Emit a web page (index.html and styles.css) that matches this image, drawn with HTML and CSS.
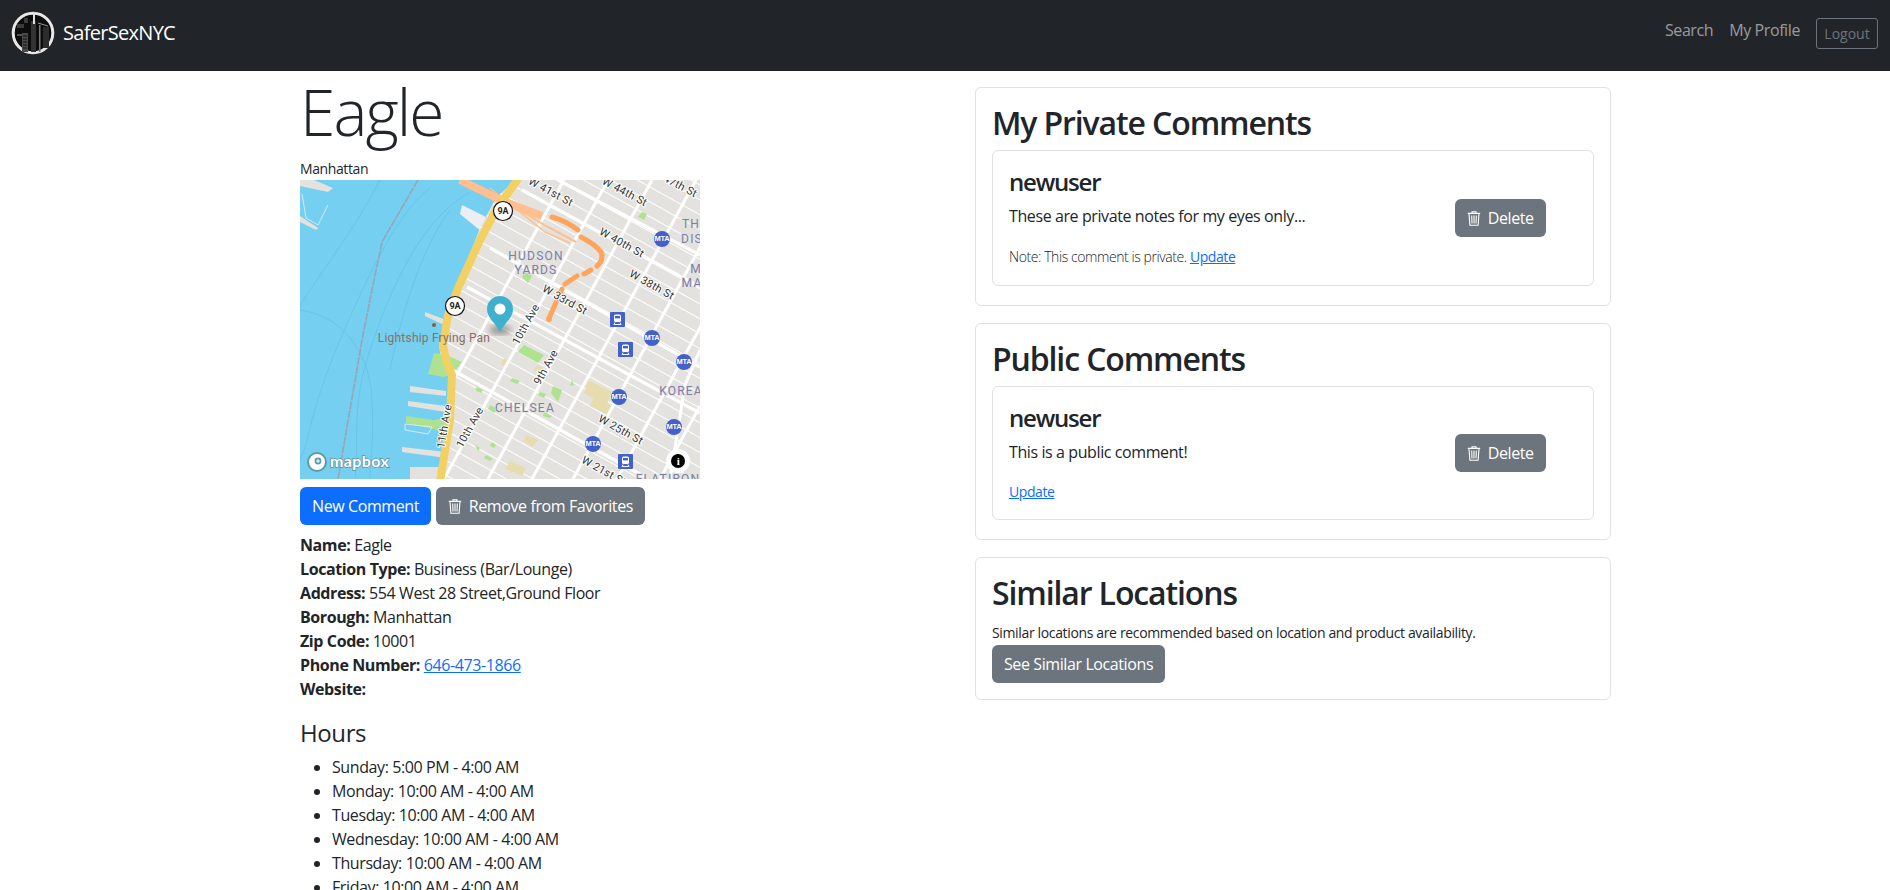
FILE: index.html

```html
<!DOCTYPE html>
<html>
<head>
  <meta charset="UTF-8">
  <title>SaferSexNYC</title>
  <link rel="stylesheet" href="styles.css">
</head>
<body>

<nav class="navbar">
  <a class="brand" href="#">
    <svg class="brandLogo" viewBox="0 0 44 44">
      <circle cx="22" cy="22" r="19.8" fill="#0c0c0c" stroke="#e8e8e8" stroke-width="3"/>
      <path d="M6 13h7v4H6zM13 7h4v5h-4z" fill="#3a3a3a"/>
      <rect x="11" y="22" width="6" height="19" fill="#4a4a4a"/>
      <rect x="20" y="10" width="5" height="31" fill="#333"/>
      <rect x="22" y="1" width="2" height="12" fill="#ddd"/>
      <rect x="28" y="14" width="1.5" height="27" fill="#777"/>
      <rect x="32" y="16" width="6" height="21" fill="#2c2c2c"/>
      <path d="M27 12l10 3M6 24h5" stroke="#999" stroke-width="1"/>
      <path d="M12 25h4M12 28h4M12 31h4M12 34h4M12 37h4" stroke="#111" stroke-width="1"/>
    </svg>
    <span>SaferSexNYC</span>
  </a>
  <div class="navLinks">
    <a href="#">Search</a>
    <a href="#">My Profile</a>
    <button class="btnLogout">Logout</button>
  </div>
</nav>

<main class="page">
  <section class="details">
    <h1 class="title">Eagle</h1>
    <div class="borough">Manhattan</div>

    <svg class="map" viewBox="0 0 400 299">
      <defs>
        <pattern id="streets" width="13" height="13" patternUnits="userSpaceOnUse" patternTransform="rotate(29)">
          <rect width="13" height="13" fill="#e4e2de"/>
          <rect y="5" width="13" height="1" fill="#fff"/>
        </pattern>
        <filter id="blur"><feGaussianBlur stdDeviation="3"/></filter>
        <symbol id="rail" viewBox="0 0 15 15">
          <rect width="15" height="15" rx="1" fill="#4460c9"/>
          <rect x="4" y="2.5" width="7" height="7.5" rx="1.5" fill="#fff"/>
          <rect x="5" y="4" width="5" height="2.4" fill="#4460c9"/>
          <path d="M4.5 12.5h6M5 10.5l-1 2.5M10 10.5l1 2.5" stroke="#fff" stroke-width="1"/>
        </symbol>
      </defs>

      <rect width="400" height="299" fill="#75cff0"/>

      <!-- water lines -->
      <g class="waterLines">
        <path d="M80 0C60 40 30 80 0 125"/>
        <path d="M130 8C100 30 70 90 40 160S10 260 0 280"/>
        <path d="M170 12C120 40 90 110 70 170S60 260 55 299"/>
        <path d="M0 130C40 135 70 170 72 220S70 280 70 299"/>
        <path d="M150 30C120 70 100 140 90 190"/>
      </g>
      <path class="channel" d="M118 0L82 62L72 110L62 160L38 299"/>

      <!-- piers -->
      <g class="pier">
        <path d="M0 6L28 12L33 8L14 0H0zM0 36L18 48L16 50L0 42z"/>
        <path d="M162 25L186 37L182 52L160 34z" fill="#eceef2"/>
        <path d="M110 206L146 211V216L110 212zM108 221L146 226V232L108 226zM102 267L146 272V278L102 272zM125 132L146 140V146L125 136zM110 287H146V299H110z"/>
      </g>
      <path class="park" d="M106 236L133 240V249L106 243z"/>
      <path class="park" d="M133 240L146 238V252L133 249z"/>
      <path d="M2 14L6 38L18 45L28 25" class="pierLine"/>
      <path d="M105 244L132 247L128 254L105 250z" class="pierLine"/>

      <!-- land -->
      <path fill="url(#streets)" d="M215 0L196 18L180 48L160 100L146 133L139 165L142 185L150 195L147 240L138 299H400V0z"/>
      <path class="park" d="M134 173L146 175L162 182L152 195L143 197L128 194z"/>

      <!-- parks and lots -->
      <g class="park">
        <path d="M224 165L244 175L238 183L218 172zM342 32L347 34L344 40L338 37zM226 90L232 96L228 103L222 97z"/>
        <path d="M212 198L220 201L217 204L210 201zM253 206L262 210L258 222L251 213zM272 200L274 205L270 206zM177 207L183 210L181 213L175 210z"/>
        <path d="M190 225L198 229L194 233L188 229zM240 212L246 214L244 218L238 215zM192 262L196 265L194 268L190 266zM244 232L252 236L250 238L243 236z"/>
        <path d="M175 265L180 268L178 271zM186 275L193 279L190 281L184 278zM300 72L306 74L302 78z"/>
      </g>
      <g class="lot">
        <path d="M288 200L312 212L306 226L284 213zM294 217L312 226L306 234L290 226zM204 178L208 180L204 187L201 184zM226 255L238 260L232 267L224 261zM210 281L226 288L222 296L205 289zM238 185L244 189L238 193L233 190z"/>
      </g>

      <!-- avenues -->
      <g class="avenue">
        <path d="M156 197L264 0"/>
        <path d="M144 299L308 0"/>
        <path d="M188 299L352 0"/>
        <path d="M232 299L396 0"/>
        <path d="M273 299L437 0"/>
        <path d="M317 299L481 0"/>
        <path d="M360 299L400 226"/>
        <path d="M370 299L385 205L400 170"/>
      </g>
      <g class="street">
        <path d="M222 10L400 107"/>
        <path d="M190 68L400 187"/>
        <path d="M167 107L400 233"/>
        <path d="M147 187L345 297"/>
        <path d="M258 0L400 75"/>
      </g>

      <!-- rail yards -->
      <g class="railBand">
        <path d="M160 0L205 22L242 36" stroke-width="8"/>
        <path d="M200 18L246 46L276 62" stroke-width="2"/>
        <path d="M190 8L245 52L270 63" stroke-width="1.5"/>
      </g>
      <g class="railLine">
        <path d="M252 37Q266 41 278 50"/>
        <path d="M281 57Q296 65 301 72Q304 80 297 86"/>
        <path d="M291 90L284 94"/>
        <path d="M277 96L265 104"/>
        <path d="M262 109L250 136"/>
      </g>
      <circle cx="249" cy="139" r="3" fill="#ffa45c"/>

      <!-- highway -->
      <path class="highway" d="M220 -4L196 30L180 60L158 108L148 135L143 165L146 180L152 195L150 240L140 302"/>
      <circle cx="134" cy="145" r="2" fill="#8b5a44"/>

      <!-- transit -->
      <use href="#rail" x="310" y="132" width="15" height="15"/>
      <use href="#rail" x="318" y="162" width="15" height="15"/>
      <use href="#rail" x="318" y="274" width="15" height="15"/>
      <g class="mta">
        <circle cx="362" cy="59" r="8"/><text x="362" y="61">MTA</text>
        <circle cx="352" cy="158" r="8"/><text x="352" y="160">MTA</text>
        <circle cx="384" cy="182" r="8"/><text x="384" y="184">MTA</text>
        <circle cx="319" cy="217" r="8"/><text x="319" y="219">MTA</text>
        <circle cx="374" cy="247" r="8"/><text x="374" y="249">MTA</text>
        <circle cx="293" cy="264" r="8"/><text x="293" y="266">MTA</text>
      </g>

      <!-- labels -->
      <g class="roadLabel">
        <text transform="translate(249 15) rotate(28)">W 41st St</text>
        <text transform="translate(323 15) rotate(28)">W 44th St</text>
        <text transform="translate(373 6) rotate(28)">W 47th St</text>
        <text transform="translate(320 66) rotate(29)">W 40th St</text>
        <text transform="translate(350 108) rotate(29)">W 38th St</text>
        <text transform="translate(263 123) rotate(29)">W 33rd St</text>
        <text transform="translate(319 253) rotate(29)">W 25th St</text>
        <text transform="translate(302 294) rotate(29)">W 21st St</text>
        <text transform="translate(229 146) rotate(-61)">10th Ave</text>
        <text transform="translate(173 249) rotate(-61)">10th Ave</text>
        <text transform="translate(249 189) rotate(-61)">9th Ave</text>
        <text transform="translate(148 247) rotate(-80)">11th Ave</text>
      </g>
      <g class="areaLabel">
        <text x="236" y="80">HUDSON</text>
        <text x="236" y="94">YARDS</text>
        <text x="225" y="232">CHELSEA</text>
        <text x="381" y="215">KOREA</text>
        <text x="391" y="48">TH</text>
        <text x="392" y="63">DIS</text>
        <text x="396" y="93">M</text>
        <text x="392" y="107">MA</text>
        <text x="368" y="303">FLATIRON</text>
      </g>
      <text class="poiLabel" x="134" y="162">Lightship Frying Pan</text>

      <!-- 9A shields -->
      <g class="shield">
        <circle cx="203" cy="31" r="9.5"/><text x="203" y="34">9A</text>
        <circle cx="155" cy="126" r="9.5"/><text x="155" y="129">9A</text>
      </g>

      <!-- marker -->
      <ellipse cx="200" cy="150" rx="11" ry="4.5" fill="#555" opacity=".55" filter="url(#blur)"/>
      <path d="M200 152C194 141 187 138 187 129A13 13 0 0 1 213 129C213 138 206 141 200 152z" fill="#3fb1ce"/>
      <circle cx="200" cy="129" r="5.5" fill="#fff"/>

      <!-- mapbox logo -->
      <circle cx="17" cy="282" r="9" fill="#fff" stroke="#5f9aa8" stroke-width="2"/>
      <circle cx="18" cy="281" r="3.4" fill="#5f9aa8"/>
      <path d="M18 279v4M16 281h4" stroke="#fff" stroke-width="1"/>
      <text class="mapboxLogo" x="30" y="287">mapbox</text>

      <!-- info -->
      <circle cx="378" cy="281" r="12" fill="#fff" opacity=".9"/>
      <circle cx="378" cy="281" r="7" fill="#000"/>
      <text class="infoMark" x="378" y="285">i</text>
    </svg>

    <div class="actions">
      <button class="btn btnPrimary">New Comment</button>
      <button class="btn btnSecondary">
        <svg class="trash" viewBox="0 0 14 15"><path d="M5 2V.8h4V2M.8 2.4h12.4M2 2.6l.9 11.6h8.2L12 2.6M4.7 4.6l.3 7.8M7 4.6v7.8M9.3 4.6L9 12.4"/></svg>
        Remove from Favorites
      </button>
    </div>

    <div class="infoList">
      <div><b>Name:</b> Eagle</div>
      <div><b>Location Type:</b> Business (Bar/Lounge)</div>
      <div><b>Address:</b> 554 West 28 Street,Ground Floor</div>
      <div><b>Borough:</b> Manhattan</div>
      <div><b>Zip Code:</b> 10001</div>
      <div><b>Phone Number:</b> <a href="#">646-473-1866</a></div>
      <div><b>Website:</b></div>
    </div>

    <h4 class="hoursTitle">Hours</h4>
    <ul class="hours">
      <li>Sunday: 5:00 PM - 4:00 AM</li>
      <li>Monday: 10:00 AM - 4:00 AM</li>
      <li>Tuesday: 10:00 AM - 4:00 AM</li>
      <li>Wednesday: 10:00 AM - 4:00 AM</li>
      <li>Thursday: 10:00 AM - 4:00 AM</li>
      <li>Friday: 10:00 AM - 4:00 AM</li>
      <li>Saturday: 10:00 AM - 4:00 AM</li>
    </ul>
  </section>

  <section class="side">
    <div class="card">
      <h2>My Private Comments</h2>
      <div class="comment">
        <div class="commentBody">
          <h4>newuser</h4>
          <p>These are private notes for my eyes only...</p>
          <div class="commentNote notePrivate"><small class="thin">Note: This comment is private. <a href="#">Update</a></small></div>
        </div>
        <button class="btn btnSecondary">
          <svg class="trash" viewBox="0 0 14 15"><path d="M5 2V.8h4V2M.8 2.4h12.4M2 2.6l.9 11.6h8.2L12 2.6M4.7 4.6l.3 7.8M7 4.6v7.8M9.3 4.6L9 12.4"/></svg>
          Delete
        </button>
      </div>
    </div>

    <div class="card">
      <h2>Public Comments</h2>
      <div class="comment">
        <div class="commentBody">
          <h4>newuser</h4>
          <p>This is a public comment!</p>
          <div class="commentNote"><small class="thin"><a href="#">Update</a></small></div>
        </div>
        <button class="btn btnSecondary">
          <svg class="trash" viewBox="0 0 14 15"><path d="M5 2V.8h4V2M.8 2.4h12.4M2 2.6l.9 11.6h8.2L12 2.6M4.7 4.6l.3 7.8M7 4.6v7.8M9.3 4.6L9 12.4"/></svg>
          Delete
        </button>
      </div>
    </div>

    <div class="card">
      <h2>Similar Locations</h2>
      <div class="similarNote"><small>Similar locations are recommended based on location and product availability.</small></div>
      <button class="btn btnSecondary">See Similar Locations</button>
    </div>
  </section>
</main>

</body>
</html>
```

FILE: styles.css

```css
body, html {
  margin: 0;
  padding: 0;
  font-family: "Open Sans", "Noto Sans", sans-serif;
  font-size: 16px;
  line-height: 24px;
  color: #212529;
  background: #fff;
  letter-spacing: -0.025em;
}
a {
  color: #0d6efd;
}
h1, h2, h4, p {
  margin: 0;
  font-weight: 500;
}

/* navbar */
.navbar {
  height: 71px;
  background: #212529;
  display: flex;
  justify-content: space-between;
  padding: 0 12px 0 11px;
  box-sizing: border-box;
}
.brand {
  display: flex;
  align-items: center;
  gap: 8px;
  height: 66px;
  color: #fff;
  font-size: 20px;
  letter-spacing: -0.035em;
  text-decoration: none;
}
.brandLogo {
  width: 44px;
  height: 44px;
}
.navLinks {
  display: flex;
  align-items: flex-start;
  gap: 16px;
  padding-top: 18px;
}
.navLinks a {
  color: rgba(255,255,255,0.55);
  text-decoration: none;
  line-height: 24px;
}
.btnLogout {
  width: 62px;
  height: 31px;
  background: none;
  border: 1px solid #6c757d;
  border-radius: 3px;
  color: #6c757d;
  font: inherit;
  font-size: 14px;
  padding: 0;
}

/* page layout */
.page {
  display: grid;
  grid-template-columns: 675px 636px;
  padding-left: 300px;
}
.title {
  font-size: 64px;
  font-weight: 300;
  line-height: 77px;
  letter-spacing: -0.03em;
  margin: 2px 0 8px;
}
.borough {
  font-size: 14px;
  line-height: 21px;
  margin-bottom: 1px;
}
.map {
  display: block;
  width: 400px;
  height: 299px;
}
.actions {
  display: flex;
  gap: 5px;
  margin: 8px 0;
}
.btn {
  height: 38px;
  padding: 0 12px;
  font: inherit;
  letter-spacing: inherit;
  color: #fff;
  border: none;
  border-radius: 6px;
  white-space: nowrap;
}
.btnPrimary {
  background: #0d6efd;
}
.btnSecondary {
  background: #6c757d;
}
.trash {
  width: 14px;
  height: 15px;
  margin-right: 3px;
  vertical-align: -2px;
  fill: none;
  stroke: #fff;
  stroke-width: 1.1;
}
.hoursTitle {
  font-size: 24px;
  line-height: 29px;
  margin: 17px 0 8px;
}
.hours {
  margin: 0;
  padding-left: 32px;
}

/* right column */
.side {
  padding-top: 16px;
}
.card {
  border: 1px solid #dfe1e5;
  border-radius: 6px;
  padding: 16px;
  margin-bottom: 17px;
}
.card h2 {
  font-size: 32px;
  font-weight: 600;
  line-height: 38px;
  letter-spacing: -0.035em;
  margin-bottom: 8px;
}
.comment {
  display: grid;
  grid-template-columns: 446px auto;
  justify-content: start;
  align-items: center;
  border: 1px solid #dfe1e5;
  border-radius: 6px;
  padding: 16px;
  margin-bottom: 3px;
}
.comment h4 {
  font-size: 24px;
  font-weight: 600;
  line-height: 29px;
  letter-spacing: -0.05em;
  margin-bottom: 8px;
}
.comment p {
  font-weight: 400;
  margin-bottom: 16px;
}
.commentNote {
  line-height: 23px;
}
.notePrivate {
  line-height: 24px;
}
small {
  font-size: 14px;
}
.thin {
  font-weight: 300;
  letter-spacing: -0.03em;
}
.thin a {
  font-weight: 400;
}
.similarNote {
  line-height: 24px;
  letter-spacing: -0.022em;
}

/* map drawing */
.waterLines path {
  fill: none;
  stroke: #62bbe4;
  stroke-width: 0.6;
}
.channel {
  fill: none;
  stroke: #97a5b4;
  stroke-width: 1.6;
  stroke-dasharray: 8 1;
}
.pier {
  fill: #e4e2de;
}
.pierLine {
  fill: none;
  stroke: #e8f2f6;
  stroke-width: 0.8;
}
.park {
  fill: #aee290;
}
.lot {
  fill: #e6dcae;
}
.avenue path {
  fill: none;
  stroke: #fff;
  stroke-width: 3;
}
.street path {
  fill: none;
  stroke: #fff;
  stroke-width: 3.2;
}
.railBand path {
  fill: none;
  stroke: #ffbf8f;
}
.railLine path {
  fill: none;
  stroke: #ffa45c;
  stroke-width: 5;
  stroke-linecap: round;
}
.highway {
  fill: none;
  stroke: #f2d064;
  stroke-width: 8;
}
.mta circle {
  fill: #4460c9;
}
.mta text {
  font-family: "Liberation Sans", sans-serif;
  font-size: 7.5px;
  font-weight: 700;
  fill: #fff;
  text-anchor: middle;
  letter-spacing: -0.3px;
}
.roadLabel text {
  font-family: Roboto, sans-serif;
  font-size: 11px;
  fill: #333;
  stroke: #fff;
  stroke-width: 2px;
  paint-order: stroke;
  text-anchor: middle;
  letter-spacing: 0.2px;
}
.areaLabel text {
  font-family: Roboto, sans-serif;
  font-size: 12px;
  fill: #7b7fa8;
  stroke: #e4e2de;
  stroke-width: 1.5px;
  paint-order: stroke;
  text-anchor: middle;
  letter-spacing: 1.2px;
}
.poiLabel {
  font-family: Roboto, sans-serif;
  font-size: 12px;
  font-weight: 400;
  fill: #8b6f62;
  text-anchor: middle;
  letter-spacing: 0.2px;
}
.shield circle {
  fill: #fff;
  stroke: #111;
  stroke-width: 1.2;
}
.shield text {
  font-family: Roboto, sans-serif;
  font-size: 9px;
  font-weight: 700;
  fill: #222;
  text-anchor: middle;
  letter-spacing: 0;
}
.mapboxLogo {
  font-family: Lato, sans-serif;
  font-size: 16px;
  font-weight: 700;
  fill: #fff;
  stroke: #5f8fa0;
  stroke-width: 1.4px;
  paint-order: stroke;
  letter-spacing: 0.4px;
}
.infoMark {
  font-family: "Liberation Serif", serif;
  font-size: 11px;
  font-weight: 700;
  fill: #fff;
  text-anchor: middle;
}
```
